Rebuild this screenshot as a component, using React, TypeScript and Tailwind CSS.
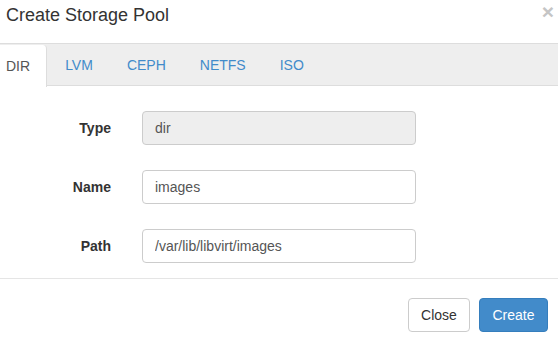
const tabs = ["DIR", "LVM", "CEPH", "NETFS", "ISO"];

const fields = [
  { label: "Type", value: "dir", readOnly: true },
  { label: "Name", value: "images", readOnly: false },
  { label: "Path", value: "/var/lib/libvirt/images", readOnly: false },
];

export default function App() {
  return (
    <div
      className="w-[558px] h-[346px] bg-white text-[#333] overflow-hidden"
      style={{ fontFamily: '"Liberation Sans", Arial, sans-serif' }}
    >
      {/* Header */}
      <div className="flex h-[43px] items-start justify-between pl-[6px] pr-[4px]">
        <h4 className="pt-[5px] text-[18px] leading-[20px] font-normal">Create Storage Pool</h4>
        <button className="pt-[2px] text-[21px] font-bold leading-[20px] text-[#c5c5c5]">×</button>
      </div>

      {/* Tabs */}
      <div className="flex h-[43px] border-y border-[#dddddd] bg-[#eeeeee]">
        <ul className="-ml-[11px] flex gap-[2px]">
          {tabs.map((t, i) => (
            <li key={t}>
              <a
                className={[
                  "flex h-[42px] items-center px-[16px] text-[14px]",
                  i === 0
                    ? "-mb-px h-[42px] mt-px rounded-t border-x border-[#dddddd] bg-white text-[#555]"
                    : "text-[#428bca]",
                ].join(" ")}
              >
                {t}
              </a>
            </li>
          ))}
        </ul>
      </div>

      {/* Body */}
      <div className="flex h-[192px] flex-col gap-[25px] pt-[25px]">
        {fields.map((f) => (
          <div key={f.label} className="flex items-center">
            <label className="w-[111px] text-right text-[14px] font-bold">{f.label}</label>
            <input
              readOnly
              value={f.value}
              className={[
                "ml-[31px] h-[34px] w-[274px] rounded border border-[#cccccc] px-[12px] text-[14px] text-[#555] outline-none",
                f.readOnly ? "bg-[#eeeeee]" : "bg-white",
              ].join(" ")}
              style={{ fontFamily: '"Liberation Sans", Arial, sans-serif' }}
            />
          </div>
        ))}
      </div>

      {/* Footer */}
      <div className="flex justify-end gap-[9px] border-t border-[#e5e5e5] pr-[10px] pt-[19px]">
        <button className="h-[34px] w-[62px] rounded border border-[#cccccc] bg-white text-[14px] text-[#333]">
          Close
        </button>
        <button className="h-[34px] w-[69px] rounded border border-[#357ebd] bg-[#428bca] text-[14px] text-white">
          Create
        </button>
      </div>
    </div>
  );
}
